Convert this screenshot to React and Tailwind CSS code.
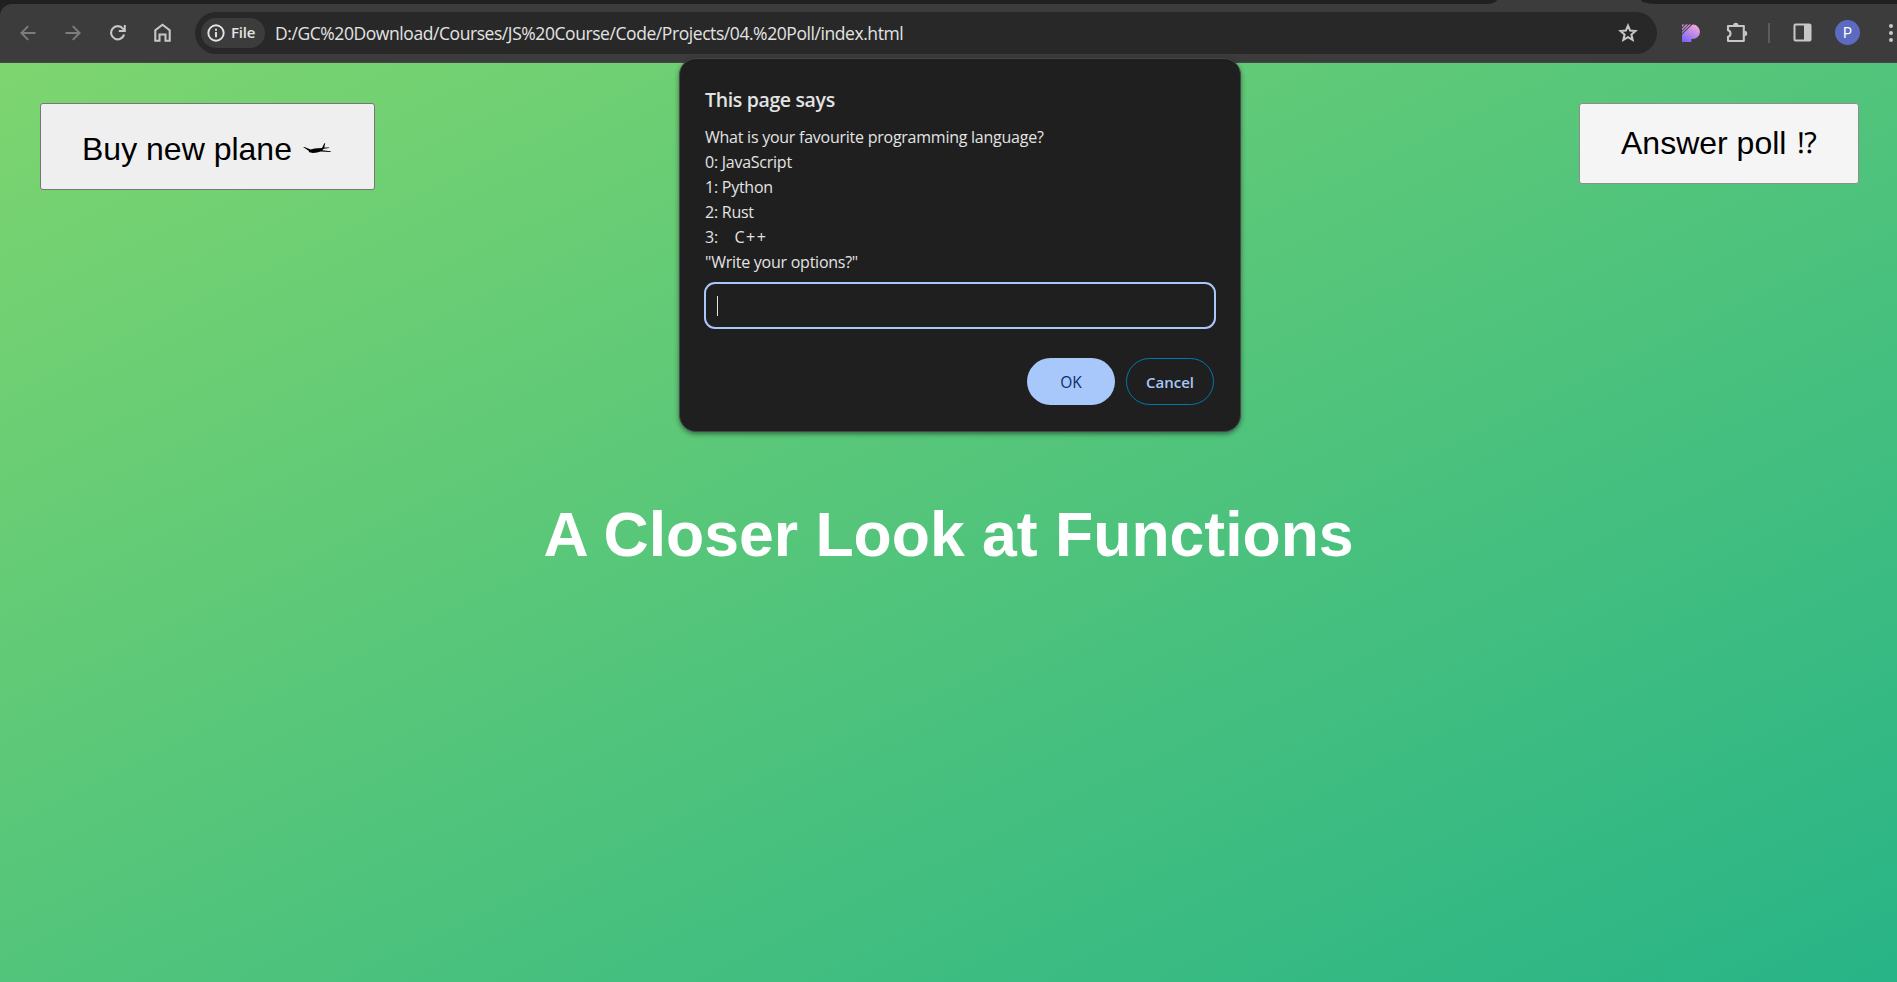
function BackIcon({ flip }) {
  return (
    <svg className={flip ? 'size-4 -scale-x-100' : 'size-4'} viewBox="0 0 16 16" fill="none" stroke="#7d7d7d" strokeWidth="1.9">
      <path d="M15.5 8H2M8.2 1.2 1.4 8l6.8 6.8" />
    </svg>
  );
}

function ReloadIcon() {
  return (
    <svg className="size-4" viewBox="0 0 16 16" fill="none" stroke="#c7c7c7" strokeWidth="2.1">
      <path d="M14.1 9.4A6.6 6.6 0 1 1 12.9 3.7L14.6 5.6" />
      <path d="M14.8 0V6H8.8" strokeWidth="2" />
    </svg>
  );
}

function HomeIcon() {
  return (
    <svg className="-ml-px h-[19px] w-[17px]" viewBox="0 0 17 19" fill="none" stroke="#c7c7c7" strokeWidth="2.1">
      <path d="M1.3 17.7V7.2L8.5 1.7l7.2 5.5v10.5h-4.2v-6.2H5.5v6.2z" />
    </svg>
  );
}

function InfoIcon() {
  return (
    <svg className="size-[18px]" viewBox="0 0 18 18" fill="none" stroke="#e3e3e3" strokeWidth="1.9">
      <circle cx="9" cy="9" r="7.7" />
      <path d="M9 8v5.2M9 4.8v2" />
    </svg>
  );
}

function StarIcon() {
  return (
    <svg className="size-5" viewBox="0 0 20 20" fill="none" stroke="#c7c7c7" strokeWidth="2">
      <path d="M10 2.6l2.1 4.9 5.4.5-4.1 3.6 1.3 5.3-4.7-2.8-4.7 2.8 1.3-5.3L2.5 8l5.4-.5z" />
    </svg>
  );
}

function PIcon() {
  return (
    <svg className="h-[18px] w-[18px]" viewBox="0 0 18 18">
      <defs>
        <linearGradient id="pg" gradientUnits="userSpaceOnUse" x1="3" y1="18" x2="13" y2="1">
          <stop offset="0" stopColor="#7a64f8" />
          <stop offset="1" stopColor="#f2a6d8" />
        </linearGradient>
      </defs>
      <path
        fill="url(#pg)"
        d="M0 18V10.800L9.600 1.200Q10.200.6 11 .6A7.200 7.200 0 0 1 10.500 15H9.300v3zM0 .6h2.400L0 3zM4 .6h1.900L0 6.500V4.600zM7.200.6h1.700L0 9.500V7.800z"
      />
    </svg>
  );
}

function PuzzleIcon() {
  return (
    <svg className="h-[21px] w-[22px]" viewBox="0 0 22 21" fill="none" stroke="#c7c7c7" strokeWidth="2.1" strokeLinejoin="round">
      <path d="M2 4h15.800v15H2v-4.300a3.300 3.300 0 0 0 0-6.400z" />
      <path d="M7.100 3.500a2.700 2.700 0 0 1 5.400 0zM18.500 8.800a2.700 2.700 0 0 1 0 5.400z" fill="#c7c7c7" stroke="none" />
    </svg>
  );
}

function PanelIcon() {
  return (
    <svg className="size-[19px]" viewBox="0 0 19 19">
      <rect x="1.500" y="1.500" width="16" height="16" rx="1" fill="none" stroke="#c7c7c7" strokeWidth="2" />
      <path d="M11 1h7v17h-7z" fill="#c7c7c7" />
    </svg>
  );
}

function PlaneIcon() {
  return (
    <svg className="ml-[2px] h-[11px] w-7" viewBox="0 0 28 11" fill="#000">
      <path d="M0 3.900l1.500.2 6.100 2.300 4-.9 7.400-.5L21.300.3l.9-.1-1 4.400 5-.1v.5l-5.400.8-1.600 1.500 8.500.9v.9l-10-.500-3.600.9-4.100.6-3.700-.9-.7-1.500L1.600 4.900z" />
    </svg>
  );
}

function BrowserBar() {
  return (
    <header className="flex h-[63px] flex-col bg-[#3c3c3c]">
      <div className="flex h-1 justify-between">
        <div className="w-[1497px] rounded-br-[12px_4px] bg-[#1f2020]" />
        <div className="w-[256px] rounded-bl-[16px_4px] bg-[#1f2020]" />
      </div>
      <div className="bg-[#1f2020]">
        <div className="flex h-[58px] items-center rounded-tl-xl bg-[#3c3c3c] pb-px">
          <div className="flex w-[195px] shrink-0 items-center gap-[29px] pl-5">
            <BackIcon />
            <BackIcon flip />
            <ReloadIcon />
            <HomeIcon />
          </div>
          <div className="flex h-[42px] w-[1462px] shrink-0 items-center rounded-full bg-[#282828] pr-[19px] pl-1.5">
            <div className="flex h-[30px] w-16 shrink-0 items-center gap-[6px] rounded-full bg-[#3c3c3c] pl-1.5">
              <InfoIcon />
              <span className="text-[15px] font-semibold tracking-[-0.2px] text-[#e3e3e3]">File</span>
            </div>
            <span className="mt-px ml-[10px] grow text-[17.5px] tracking-[-0.43px] whitespace-nowrap text-[#e3e3e3]">
              D:/GC%20Download/Courses/JS%20Course/Code/Projects/04.%20Poll/index.html
            </span>
            <StarIcon />
          </div>
          <div className="flex grow items-center pl-[25px]">
            <PIcon />
            <div className="ml-[26px]"><PuzzleIcon /></div>
            <div className="ml-[20px] h-5 w-[2px] shrink-0 bg-[#5c5c5c]" />
            <div className="ml-[23px]"><PanelIcon /></div>
            <div className="ml-[23px] flex size-[25px] shrink-0 items-center justify-center rounded-full bg-[#5c6bc0] pt-px font-[Roboto] text-[14px] text-white">P</div>
            <div className="ml-[29px] flex shrink-0 flex-col gap-[3px]">
              <i className="size-1 rounded-full bg-[#c7c7c7]" />
              <i className="size-1 rounded-full bg-[#c7c7c7]" />
              <i className="size-1 rounded-full bg-[#c7c7c7]" />
            </div>
          </div>
        </div>
      </div>
      <div className="h-px bg-[#474747]" />
    </header>
  );
}

function PromptDialog() {
  return (
    <div className="absolute top-[58px] left-[679px] flex h-[374px] w-[562px] flex-col rounded-[17px] border border-[#474747] bg-[#1f1f1f] px-[25px] pt-[26px] text-[#e3e3e3] shadow-[0_2px_5px_rgba(0,0,0,0.45)]">
      <h2 className="text-[19.5px] leading-[30px] font-semibold tracking-[-0.35px]">This page says</h2>
      <div className="mt-[10px] text-[16px] leading-[25px] tracking-[-0.25px] whitespace-pre">
        <p>What is your favourite programming language?</p>
        <p>0: JavaScript</p>
        <p>1: Python</p>
        <p>2: Rust</p>
        <p>3:{'    '}<span className="ml-px tracking-[1.5px]">C++</span></p>
        <p>"Write your options?"</p>
      </div>
      <div className="-mx-px mt-[7px] flex h-[47px] w-[512px] shrink-0 items-center rounded-[11px] border-[2.5px] border-[#a8c7fa] pl-[11px]">
        <div className="h-5 w-px bg-[#e3e3e3]" />
      </div>
      <div className="mt-[29px] flex justify-end gap-[11px] pr-px text-[15px] font-semibold">
        <button className="h-[47px] w-[88px] rounded-full bg-[#a8c7fa] pt-0.5 text-[15.5px] font-medium text-[#062e6f]">OK</button>
        <button className="h-[47px] w-[88px] rounded-full border border-[#0078b0] pt-0.5 text-[#a8c7fa]">Cancel</button>
      </div>
    </div>
  );
}

export default function App() {
  return (
    <div className="relative flex h-[982px] w-[1897px] flex-col overflow-hidden font-['Open_Sans','Noto_Sans',sans-serif]">
      <BrowserBar />
      <main className="flex grow flex-col bg-[linear-gradient(to_top_left,#28b487,#7dd56f)] font-['Liberation_Sans',Arial,sans-serif]">
        <div className="flex h-[428px] items-start justify-between pt-10 pr-[38px] pl-10 text-[32px] text-black">
          <button className="flex h-[87px] w-[335px] items-center rounded-[3px] border border-[#767676] bg-[#efefef] pt-1 pl-[41px]">
            <span className="whitespace-pre">Buy new plane </span>
            <PlaneIcon />
          </button>
          <button className="flex h-[81px] w-[280px] items-center rounded-[3px] border border-[#8d8d8d] bg-[#f5f5f5] pb-0.5 pl-[41px]">
            <span className="whitespace-pre">Answer poll </span>
            <span className="ml-[2px] pt-0.5 font-['Liberation_Serif',serif] text-[29px]">⁉</span>
          </button>
        </div>
        <h1 className="text-center text-[62.5px] leading-[86px] font-bold text-white">A Closer Look at Functions</h1>
      </main>
      <PromptDialog />
    </div>
  );
}
